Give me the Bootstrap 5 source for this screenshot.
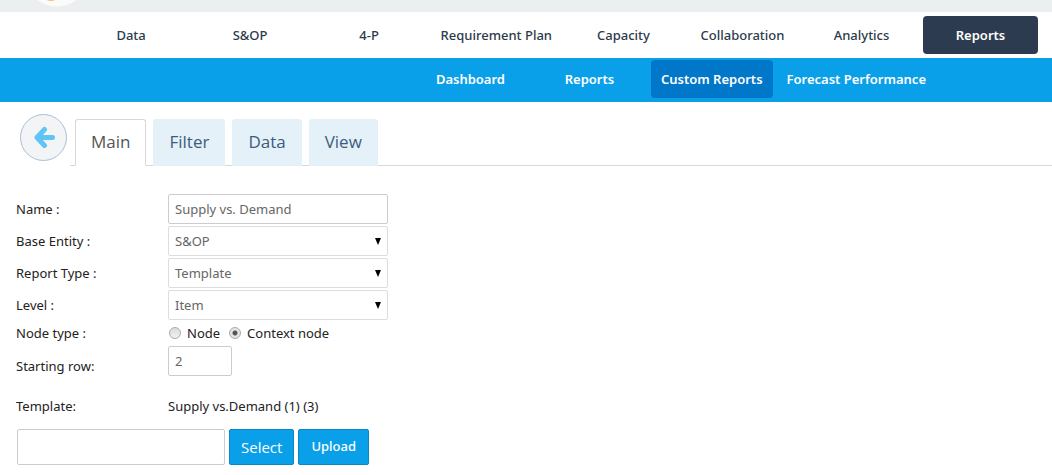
<!DOCTYPE html>
<html lang="en">
<head>
<meta charset="utf-8">
<meta name="viewport" content="width=device-width, initial-scale=1">
<title>Custom Reports</title>
<link href="https://cdn.jsdelivr.net/npm/bootstrap@5.3.0/dist/css/bootstrap.min.css" rel="stylesheet">
<style>
  body { font-family: "Noto Sans", "Open Sans", sans-serif; font-size: 13px; line-height: 20px; color: #222; background: #fff; }
  .brand-strip { height: 12px; background: #ebeff0; overflow: hidden; padding-left: 36px; }
  .brand-strip svg { display: block; }
  .nav-primary { min-height: 46px; padding: 0 14px; }
  .nav-secondary { min-height: 44px; padding: 0 116px 2px 14px; background: #0a9fe9; }
  .menu-item { min-width: 115px; height: 38px; padding: 9px 10px; border-radius: 4px; text-align: center; white-space: nowrap; text-decoration: none; }
  .nav-primary .menu-item { color: #2c3b4c; font-weight: 500; }
  .nav-primary .menu-item.active { background: #2c3b4f; color: #fff; font-weight: 600; }
  .nav-secondary .menu-item { color: #fff; font-weight: 600; }
  .nav-secondary .menu-item.active { background: #0077c8; }
  .tab-row { padding: 12px 0 0 20px; }
  .back-btn { width: 47px; height: 47px; padding: 0; border: 1px solid #a9c0d6; border-radius: 50%; background: #f3f4f5; margin-right: 3px; }
  .back-btn svg { display: block; margin: auto; }
  .tab-row .nav-tabs { padding: 5px 0 0 5px; gap: 7px; border-color: #d5d9db; }
  .tab-row .nav-link { font-family: "Open Sans", sans-serif; font-size: 17px; line-height: 24px; height: 47px; padding: 10px 15px; color: #3d5c7c; background: #e5f1f8; border-radius: 3px 3px 0 0; }
  .tab-row .nav-link.active { color: #555; background: #fff; border-color: #d5d9db #d5d9db #fff; }
  .report-form { padding: 28px 16px 8px; }
  .field-stack { gap: 2px; }
  .field-row { display: grid; grid-template-columns: 152px 1fr; align-items: center; }
  .field-row-radio { min-height: 26px; }
  .label-low { padding-top: 10px; }
  .template-row { margin-top: 20px; }
  .field { width: 220px; height: 30px; padding: 4px 6px; border-radius: 2px; border-color: #ccc; font-size: 13px; line-height: 20px; color: #666; }
  select.field { border-color: #ddd; background-size: 6px 7px; background-position: right 6px center; background-image: url("data:image/svg+xml,%3csvg xmlns='http://www.w3.org/2000/svg' viewBox='0 0 6 7' preserveAspectRatio='none'%3e%3cpath d='M0 0h6L3 7z'/%3e%3c/svg%3e"); }
  .field-short { width: 64px; }
  .radio-dot { appearance: none; width: 12px; height: 12px; margin: 0 6px 0 1px; border: 1px solid #aaa; border-radius: 50%; background: linear-gradient(#dcdcdc, #f0f0f0); }
  .radio-dot:checked { background: radial-gradient(circle, #555 0 2px, #e4e4e4 3px); }
  .upload-row { gap: 4px; margin: 13px 0 0 1px; }
  .file-box { width: 208px; height: 36px; border-radius: 2px; border-color: #ccc; }
  .btn-action { height: 36px; padding: 0 12px; border: 1px solid #0b86c6; border-radius: 2px; background: #0a9fe9; color: #fff; font-size: 13px; font-weight: 500; }
  .btn-large-text { font-family: "Open Sans", sans-serif; font-size: 15px; font-weight: 400; padding: 0 11px; }
</style>
</head>
<body>
<header>
  <div class="brand-strip">
    <svg width="44" height="8" viewBox="0 0 44 8" aria-hidden="true"><ellipse cx="21" cy="-12" rx="26" ry="18.5" fill="#fafbfb"/><ellipse cx="15" cy="-4" rx="7" ry="5" fill="#f5be6b"/></svg>
  </div>
  <nav class="nav-primary d-flex justify-content-end align-items-center gap-1" aria-label="Main">
    <a class="menu-item" href="#">Data</a>
    <a class="menu-item" href="#">S&amp;OP</a>
    <a class="menu-item" href="#">4-P</a>
    <a class="menu-item" href="#">Requirement Plan</a>
    <a class="menu-item" href="#">Capacity</a>
    <a class="menu-item" href="#">Collaboration</a>
    <a class="menu-item" href="#">Analytics</a>
    <a class="menu-item active" href="#">Reports</a>
  </nav>
  <nav class="nav-secondary d-flex justify-content-end align-items-center gap-1" aria-label="Reports">
    <a class="menu-item" href="#">Dashboard</a>
    <a class="menu-item" href="#">Reports</a>
    <a class="menu-item active" href="#">Custom Reports</a>
    <a class="menu-item" href="#">Forecast Performance</a>
  </nav>
</header>
<main>
  <div class="tab-row d-flex">
    <button class="back-btn flex-shrink-0" type="button" aria-label="Back">
      <svg width="24" height="24" viewBox="0 0 24 24" fill="none" stroke="#5fc5f7" stroke-width="5" stroke-linecap="round" stroke-linejoin="round"><path d="M12.5 3.5 5 11.5l7.500 8M5.500 11.500h15"/></svg>
    </button>
    <ul class="nav nav-tabs flex-grow-1">
      <li class="nav-item"><a class="nav-link active" aria-current="page" href="#">Main</a></li>
      <li class="nav-item"><a class="nav-link" href="#">Filter</a></li>
      <li class="nav-item"><a class="nav-link" href="#">Data</a></li>
      <li class="nav-item"><a class="nav-link" href="#">View</a></li>
    </ul>
  </div>
  <form class="report-form">
    <div class="field-stack d-flex flex-column">
      <div class="field-row"><label for="name">Name :</label><input class="form-control field" id="name" type="text" value="Supply vs. Demand"></div>
      <div class="field-row"><label for="entity">Base Entity :</label><select class="form-select field" id="entity"><option>S&amp;OP</option></select></div>
      <div class="field-row"><label for="type">Report Type :</label><select class="form-select field" id="type"><option>Template</option></select></div>
      <div class="field-row"><label for="level">Level :</label><select class="form-select field" id="level"><option>Item</option></select></div>
    </div>
    <div class="field-row field-row-radio" role="radiogroup" aria-labelledby="node-label"><span id="node-label">Node type :</span>
      <div class="d-flex align-items-center"><input class="radio-dot" type="radio" name="node" id="node-plain"><label class="me-2" for="node-plain">Node</label><input class="radio-dot" type="radio" name="node" id="node-context" checked><label for="node-context">Context node</label></div>
    </div>
    <div class="field-row"><label class="label-low" for="row-start">Starting row:</label><input class="form-control field field-short" id="row-start" type="text" value="2"></div>
    <div class="field-row template-row"><span>Template:</span><span>Supply vs.Demand (1) (3)</span></div>
    <div class="upload-row d-flex"><input class="form-control file-box" type="text" aria-label="Template file"><button class="btn btn-action btn-large-text" type="button">Select</button><button class="btn btn-action" type="button">Upload</button></div>
  </form>
</main>
<script src="https://cdn.jsdelivr.net/npm/bootstrap@5.3.0/dist/js/bootstrap.bundle.min.js"></script>
</body>
</html>
